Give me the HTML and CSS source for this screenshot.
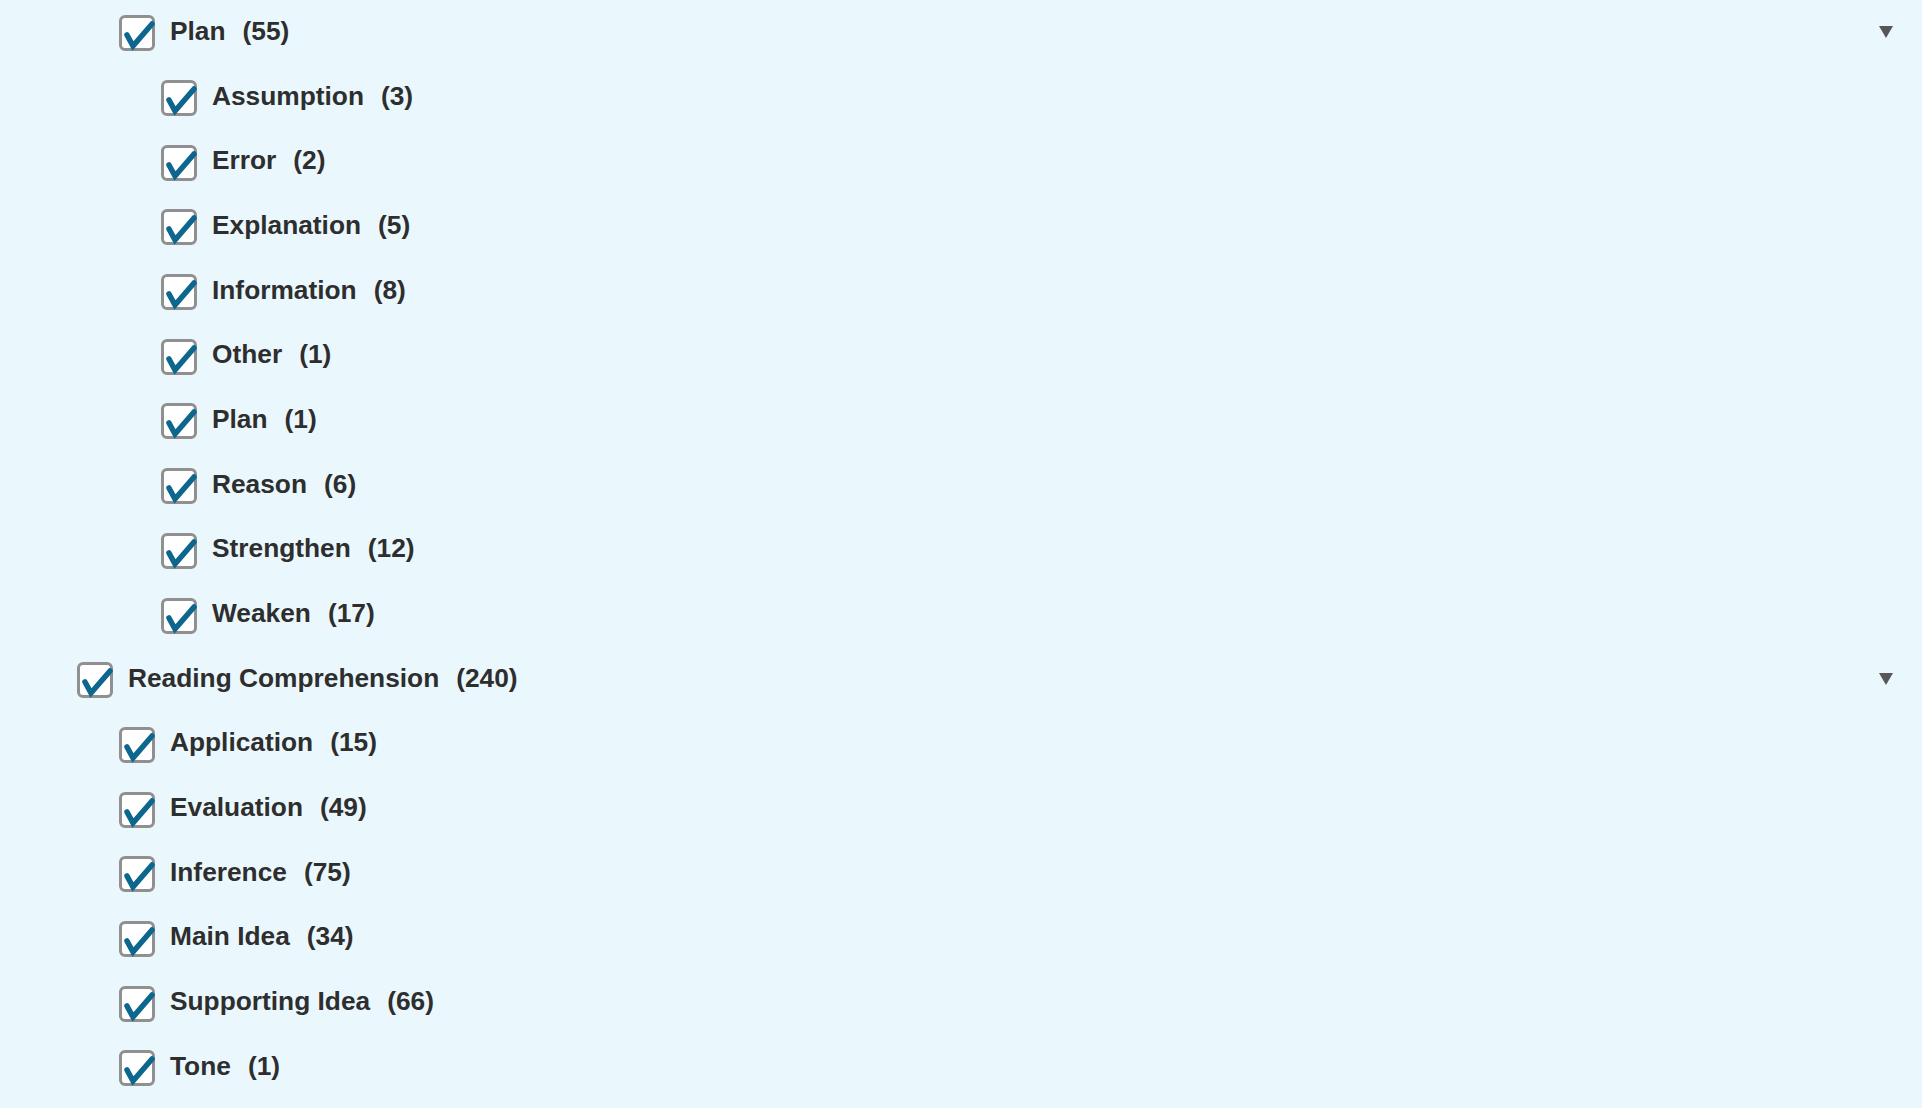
FILE: index.html
```html
<!DOCTYPE html>
<html lang="en">
<head>
    <meta charset="UTF-8">
    <meta name="viewport" content="width=device-width, initial-scale=1.0">
    <title>Question Types</title>
    <link rel="stylesheet" href="styles.css">
</head>
<body>
    <ul class="tree">
        <li class="row level-1">
            <label class="item"><span class="box"><svg viewBox="0 0 36 36"><polyline points="8,20 14,31 33,9"/></svg></span><span class="name">Plan</span><span class="count">(55)</span></label>
            <span class="toggle"></span>
        </li>
        <li class="row level-2"><label class="item"><span class="box"><svg viewBox="0 0 36 36"><polyline points="8,20 14,31 33,9"/></svg></span><span class="name">Assumption</span><span class="count">(3)</span></label></li>
        <li class="row level-2"><label class="item"><span class="box"><svg viewBox="0 0 36 36"><polyline points="8,20 14,31 33,9"/></svg></span><span class="name">Error</span><span class="count">(2)</span></label></li>
        <li class="row level-2"><label class="item"><span class="box"><svg viewBox="0 0 36 36"><polyline points="8,20 14,31 33,9"/></svg></span><span class="name">Explanation</span><span class="count">(5)</span></label></li>
        <li class="row level-2"><label class="item"><span class="box"><svg viewBox="0 0 36 36"><polyline points="8,20 14,31 33,9"/></svg></span><span class="name">Information</span><span class="count">(8)</span></label></li>
        <li class="row level-2"><label class="item"><span class="box"><svg viewBox="0 0 36 36"><polyline points="8,20 14,31 33,9"/></svg></span><span class="name">Other</span><span class="count">(1)</span></label></li>
        <li class="row level-2"><label class="item"><span class="box"><svg viewBox="0 0 36 36"><polyline points="8,20 14,31 33,9"/></svg></span><span class="name">Plan</span><span class="count">(1)</span></label></li>
        <li class="row level-2"><label class="item"><span class="box"><svg viewBox="0 0 36 36"><polyline points="8,20 14,31 33,9"/></svg></span><span class="name">Reason</span><span class="count">(6)</span></label></li>
        <li class="row level-2"><label class="item"><span class="box"><svg viewBox="0 0 36 36"><polyline points="8,20 14,31 33,9"/></svg></span><span class="name">Strengthen</span><span class="count">(12)</span></label></li>
        <li class="row level-2"><label class="item"><span class="box"><svg viewBox="0 0 36 36"><polyline points="8,20 14,31 33,9"/></svg></span><span class="name">Weaken</span><span class="count">(17)</span></label></li>
        <li class="row level-0">
            <label class="item"><span class="box"><svg viewBox="0 0 36 36"><polyline points="8,20 14,31 33,9"/></svg></span><span class="name">Reading Comprehension</span><span class="count">(240)</span></label>
            <span class="toggle"></span>
        </li>
        <li class="row level-1"><label class="item"><span class="box"><svg viewBox="0 0 36 36"><polyline points="8,20 14,31 33,9"/></svg></span><span class="name">Application</span><span class="count">(15)</span></label></li>
        <li class="row level-1"><label class="item"><span class="box"><svg viewBox="0 0 36 36"><polyline points="8,20 14,31 33,9"/></svg></span><span class="name">Evaluation</span><span class="count">(49)</span></label></li>
        <li class="row level-1"><label class="item"><span class="box"><svg viewBox="0 0 36 36"><polyline points="8,20 14,31 33,9"/></svg></span><span class="name">Inference</span><span class="count">(75)</span></label></li>
        <li class="row level-1"><label class="item"><span class="box"><svg viewBox="0 0 36 36"><polyline points="8,20 14,31 33,9"/></svg></span><span class="name">Main Idea</span><span class="count">(34)</span></label></li>
        <li class="row level-1"><label class="item"><span class="box"><svg viewBox="0 0 36 36"><polyline points="8,20 14,31 33,9"/></svg></span><span class="name">Supporting Idea</span><span class="count">(66)</span></label></li>
        <li class="row level-1"><label class="item"><span class="box"><svg viewBox="0 0 36 36"><polyline points="8,20 14,31 33,9"/></svg></span><span class="name">Tone</span><span class="count">(1)</span></label></li>
    </ul>
</body>
</html>
```

FILE: styles.css
```css
body {
    margin: 0;
    padding: 0;
    background-color: #eaf8fe;
    font-family: "Liberation Sans", Arial, sans-serif;
    color: #2e2e2e;
    overflow: hidden;
}

.tree {
    list-style: none;
    margin: -1px 0 0 0;
    padding: 0 29px 0 77px;
}

.row {
    display: flex;
    justify-content: space-between;
    align-items: center;
    height: 64.7px;
}

.level-1 {
    padding-left: 42px;
}

.level-2 {
    padding-left: 84px;
}

.item {
    display: flex;
    align-items: center;
    font-size: 26.3px;
    font-weight: bold;
    cursor: pointer;
}

.box {
    display: block;
    width: 36px;
    height: 36px;
    box-sizing: border-box;
    border: 3px solid #909090;
    border-radius: 6px;
    background-color: #ffffff;
    margin-top: 4px;
    margin-right: 15px;
    position: relative;
}

.box svg {
    position: absolute;
    left: -3px;
    top: -3px;
    width: 36px;
    height: 36px;
    overflow: visible;
}

.box polyline {
    fill: none;
    stroke: #0c668d;
    stroke-width: 5.5;
    stroke-linecap: round;
    stroke-linejoin: miter;
}

.count {
    margin-left: 17px;
}

.toggle {
    width: 0;
    height: 0;
    border-left: 7.5px solid transparent;
    border-right: 7.5px solid transparent;
    border-top: 12px solid #575757;
    margin-top: 1px;
}
```
